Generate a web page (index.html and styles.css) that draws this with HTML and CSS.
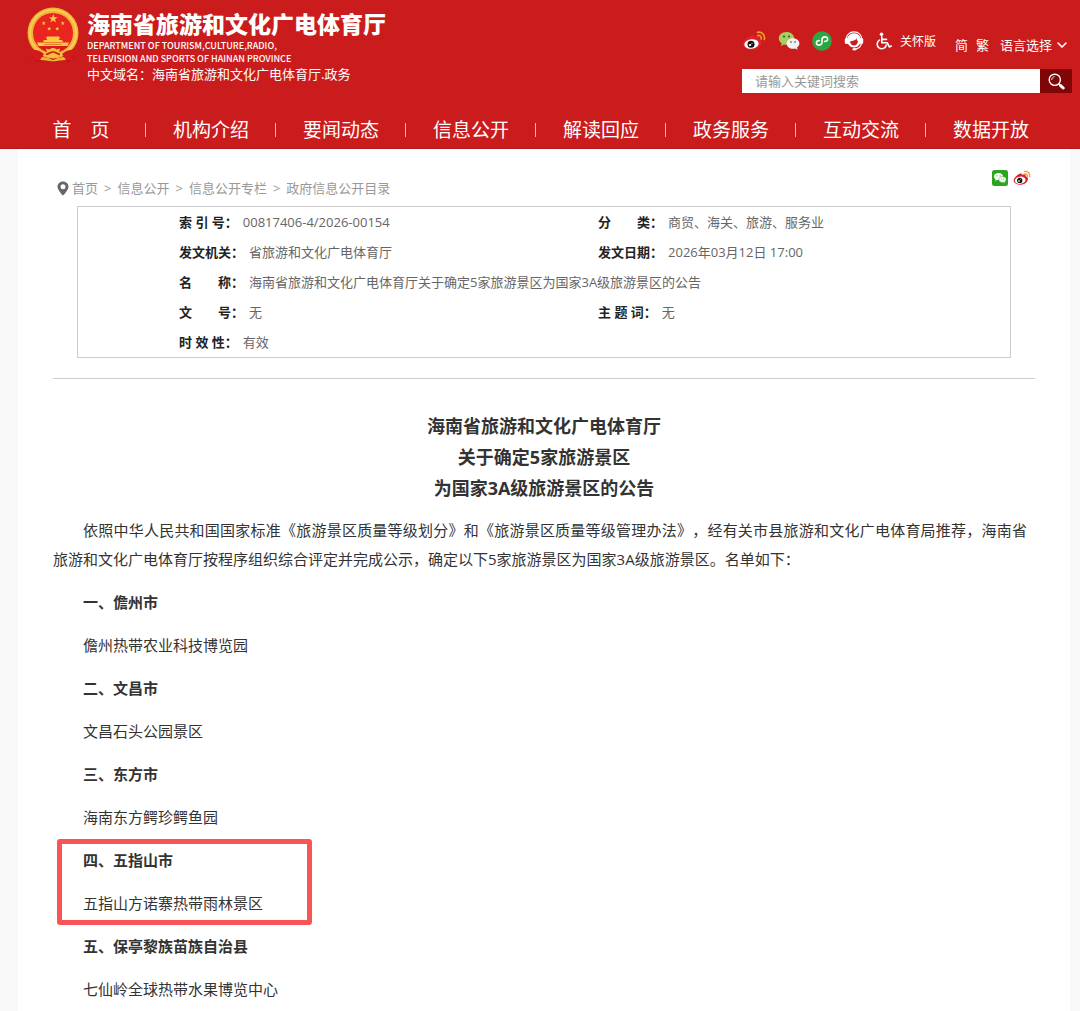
FILE: index.html
```
<!DOCTYPE html>
<html lang="zh-CN">
<head>
  <meta charset="UTF-8">
  <meta name="viewport" content="width=device-width, initial-scale=1">
  <title>海南省旅游和文化广电体育厅</title>
  <link rel="stylesheet" href="styles.css">
</head>
<body>

  <svg class="sprite" aria-hidden="true">
    <symbol id="star" viewBox="-10 -10 20 20">
      <path d="M0-10 2.3-3.1H9.5L3.7 1.2 5.9 8.1 0 3.9-5.9 8.1-3.7 1.2-9.5-3.1H-2.3Z"/>
    </symbol>
    <symbol id="weibo" viewBox="0 0 24 20">
      <path d="M9 4.3c1.700-.8 3.400-.4 3.100 1.500 2.500-1.100 5.400-1 4.800 1.700 2.300.8 3.300 2.300 3 4.400-.6 4-5.200 7-10.400 7C4.700 18.900.8 16.700.8 13.100.8 10 5.200 6 9 4.300Z" fill="#e0202a"/>
      <ellipse cx="9.500" cy="13" rx="7.200" ry="4.800" fill="#fff" transform="rotate(-7 9.500 13)"/>
      <circle cx="9" cy="13.200" r="3.500" fill="#111"/>
      <ellipse cx="8" cy="14" rx="1.300" ry="1" fill="#fff"/>
      <circle cx="10" cy="12.300" r=".6" fill="#fff"/>
      <path d="M15.500 1.300c4.500-.7 7.800 2.700 6.800 7.200M15.800 4.500c2.300-.4 3.900 1.200 3.400 3.500" fill="none" stroke="#f39a25" stroke-width="1.700" stroke-linecap="round"/>
    </symbol>
  </svg>

  <header class="header">
    <div class="header-top">
      <a class="brand" href="#">
        <svg class="emblem" viewBox="0 0 52 56" aria-hidden="true">
          <path d="M5 42 2 50l6 1 1 4 9-2 8 2 8-2 9 2 1-4 6-1-3-8Z" fill="#b70f12"/>
          <circle cx="26" cy="26" r="25.500" fill="#f0b437"/>
          <circle cx="26" cy="26" r="23" fill="none" stroke="#f8cd55" stroke-width="2"/>
          <circle cx="26" cy="26" r="20" fill="#ea2420"/>
          <g fill="#f9c93f">
            <use href="#star" x="21.500" y="7" width="9.500" height="9.500"/>
            <use href="#star" x="14.500" y="14" width="4.500" height="4.500"/>
            <use href="#star" x="33.500" y="14" width="4.500" height="4.500"/>
            <use href="#star" x="20" y="19.500" width="4.500" height="4.500"/>
            <use href="#star" x="28" y="19.500" width="4.500" height="4.500"/>
            <path d="M20 29.500h12l1.500 2h-1.500v1.500h3l1 2H16l1-2h3v-1.500h-1.500Z"/>
            <path d="M10 35.500h32l-1.500 3.500h-29Z"/>
          </g>
          <path d="M17 37.500h18" stroke="#d98b22"/>
          <path d="M11 39h30c-2 3-7 5-15 5s-13-2-15-5Z" fill="#d91b1a"/>
          <path d="M1.500 43c6-1 12 0 15.500 4l-4 7-5-1-1-3H2Zm49 0c-6-1-12 0-15.500 4l4 7 5-1 1-3H50Z" fill="#d2191b"/>
          <path d="m19 41.500 3.500 1c1-1 2-1.500 3.500-1.500s2.500.5 3.500 1.500l3.500-1-1 4 4.500 3-6 .5-4.500 2.500-4.500-2.500-6-.5 4.500-3Z" fill="#f5be3b"/>
          <path d="M19 47.500c4-1 4-2.500 7-2.500s3 1.500 7 2.500" fill="none" stroke="#d2191b" stroke-width="1.500"/>
          <path d="M15 50c4 0 7 1 11 3 4-2 7-3 11-3l2 3-6 .5-7 1-7-1-6-.5Z" fill="#eeb035"/>
        </svg>
        <span class="brand-text">
          <span class="brand-name">海南省旅游和文化广电体育厅</span>
          <span class="brand-en">DEPARTMENT OF TOURISM,CULTURE,RADIO,<br>TELEVISION AND SPORTS OF HAINAN PROVINCE</span>
          <span class="brand-domain">中文域名：海南省旅游和文化广电体育厅.政务</span>
        </span>
      </a>

      <div class="tools">
        <div class="tool-row">
          <div class="social">
            <a href="#" aria-label="微博"><svg width="24" height="20"><use href="#weibo"/></svg></a>
            <a href="#" aria-label="微信">
              <svg width="22" height="20" viewBox="0 0 22 20">
                <path d="M8.500 1C4 1 .8 3.800.8 7.300c0 2 1 3.800 2.900 5l-.8 2.700 3-1.500c.8.200 1.600.3 2.600.3 4.300 0 7.600-2.800 7.600-6.500S12.800 1 8.500 1Z" fill="#a6cf62"/>
                <circle cx="6" cy="5.500" r="1" fill="#334b1c"/><circle cx="11" cy="5.500" r="1" fill="#334b1c"/>
                <path d="M15 7.200c-3.600 0-6.400 2.300-6.400 5.200s2.800 5.300 6.400 5.300c.8 0 1.500-.1 2.200-.3l2.400 1.400-.6-2.300c1.500-1 2.400-2.400 2.400-4.100 0-2.900-2.800-5.200-6.400-5.200Z" fill="#f1f1f1"/>
                <circle cx="13" cy="11" r=".9" fill="#777"/><circle cx="17" cy="11" r=".9" fill="#777"/>
              </svg>
            </a>
            <a href="#" aria-label="小程序">
              <svg width="20" height="20" viewBox="0 0 20 20">
                <circle cx="10" cy="10" r="9.800" fill="#2ea443"/>
                <path d="M7.300 9.600c-1.900-.1-3 .9-2.900 2.300.1 1.400 1.300 2.300 2.700 2.200 1.700-.1 2.900-1.100 2.900-2.800V8.700c0-1.700 1.200-2.700 2.900-2.800 1.400-.1 2.600.8 2.700 2.200.1 1.400-1 2.400-2.900 2.300" fill="none" stroke="#fff" stroke-width="1.600" stroke-linecap="round"/>
              </svg>
            </a>
            <a href="#" aria-label="智能客服">
              <svg width="20" height="20" viewBox="0 0 20 20">
                <path d="M2.200 8C2.500 3.800 5.500.8 10 .8s7.500 3 7.800 7.200" fill="none" stroke="#fff" stroke-width="1.200"/>
                <path d="M10 2.200c-4.300 0-6.800 3-6.800 6.800 0 4 2.800 7.500 6.800 7.500s6.800-3.500 6.800-7.500c0-3.800-2.500-6.800-6.800-6.800Z" fill="#fff"/>
                <path d="M6 10.300c3 0 5.200-1 6.700-2.800 0 1.400.5 2.300 1.300 2.800-.3 2.600-1.600 4.200-4 4.200s-3.700-1.600-4-4.200Z" fill="#cb1c1d"/>
                <rect x=".8" y="7" width="3.500" height="6" rx="1.500" fill="#fff"/><rect x="15.700" y="7" width="3.500" height="6" rx="1.500" fill="#fff"/>
                <path d="M17.500 12c-.4 3.500-3 5.500-6 6" fill="none" stroke="#fff" stroke-width="1.200"/>
                <ellipse cx="10.500" cy="18.200" rx="2" ry="1.200" fill="#fff"/>
              </svg>
            </a>
            <a class="care" href="#">
              <svg width="16" height="18" viewBox="0 0 16 18" fill="none" stroke="#fff" stroke-width="1.600" stroke-linecap="round" stroke-linejoin="round">
                <circle cx="5.500" cy="2.300" r="1.800" fill="#fff" stroke="none"/>
                <path d="M5.800 4.500v6.200h5.400l2.100 4.200 2-.8M6 7.400h4.500M3.500 8.100A4.600 4.600 0 1 0 10.300 13"/>
              </svg>
              关怀版
            </a>
          </div>
          <div class="lang">
            <a href="#">简</a>
            <a href="#">繁</a>
            <button type="button" class="lang-btn">语言选择
              <svg width="10" height="6" viewBox="0 0 10 6"><path d="m1 1 4 4 4-4" fill="none" stroke="#fff" stroke-width="1.500" stroke-linecap="round"/></svg>
            </button>
          </div>
        </div>
        <form class="search">
          <input type="text" placeholder="请输入关键词搜索" aria-label="请输入关键词搜索">
          <button type="button" aria-label="搜索">
            <svg width="17" height="17" viewBox="0 0 17 17" fill="none" stroke="#fff" stroke-linecap="round">
              <circle cx="6.800" cy="6.800" r="5.600" stroke-width="1.400"/>
              <path d="M3.800 6.500c.2-1.500 1-2.400 2.400-2.700" stroke-width="1"/>
              <path d="m11.200 11.200 1 1" stroke-width="1.500"/>
              <path d="m12.600 12.600 2.600 2.400" stroke-width="3"/>
            </svg>
          </button>
        </form>
      </div>
    </div>

    <nav class="nav">
      <a href="#">首&emsp;页</a>
      <a href="#">机构介绍</a>
      <a href="#">要闻动态</a>
      <a href="#">信息公开</a>
      <a href="#">解读回应</a>
      <a href="#">政务服务</a>
      <a href="#">互动交流</a>
      <a href="#">数据开放</a>
    </nav>
  </header>

  <main class="page">
    <div class="location">
      <div class="crumbs">
        <svg width="12" height="15" viewBox="0 0 12 15"><path d="M6 .5C2.800.5.5 2.800.5 5.700.5 9 6 14.500 6 14.500S11.500 9 11.500 5.700C11.500 2.800 9.200.5 6 .5Zm0 2.800a2.500 2.500 0 1 1 0 5 2.500 2.500 0 0 1 0-5Z" fill="#666" fill-rule="evenodd"/></svg>
        <a href="#">首页</a><i>&gt;</i><a href="#">信息公开</a><i>&gt;</i><a href="#">信息公开专栏</a><i>&gt;</i><a href="#">政府信息公开目录</a>
      </div>
      <div class="share">
        <a href="#" aria-label="分享到微信">
          <svg width="16" height="16" viewBox="0 0 16 16">
            <rect width="16" height="16" rx="2.500" fill="#2ba51f"/>
            <path d="M6.500 3C4 3 2 4.500 2 6.500c0 1.100.6 2 1.600 2.700L3.200 10.800 5 9.900c2.900.5 5.800-1 5.900-3.400C11 4.500 9 3 6.500 3Z" fill="#fff"/>
            <path d="M10.500 6.500C8.400 6.500 6.800 7.800 6.800 9.500s1.600 3 3.700 3l1.200-.1 1.500.8-.3-1.400c.8-.6 1.300-1.400 1.300-2.300 0-1.700-1.600-3-3.700-3Z" fill="#fff" stroke="#2ba51f" stroke-width=".5"/>
            <g fill="#2ba51f"><circle cx="5" cy="5.800" r=".6"/><circle cx="8" cy="5.800" r=".6"/><circle cx="9.400" cy="9" r=".5"/><circle cx="11.700" cy="9" r=".5"/></g>
          </svg>
        </a>
        <a href="#" aria-label="分享到微博"><svg width="18" height="16"><use href="#weibo"/></svg></a>
      </div>
    </div>

    <dl class="meta">
      <div><dt>索 引 号：</dt><dd>00817406-4/2026-00154</dd></div>
      <div><dt>分　　类：</dt><dd>商贸、海关、旅游、服务业</dd></div>
      <div><dt>发文机关：</dt><dd>省旅游和文化广电体育厅</dd></div>
      <div><dt>发文日期：</dt><dd>2026年03月12日 17:00</dd></div>
      <div class="wide"><dt>名　　称：</dt><dd>海南省旅游和文化广电体育厅关于确定5家旅游景区为国家3A级旅游景区的公告</dd></div>
      <div><dt>文　　号：</dt><dd>无</dd></div>
      <div><dt>主 题 词：</dt><dd>无</dd></div>
      <div class="wide"><dt>时 效 性：</dt><dd>有效</dd></div>
    </dl>

    <article class="article">
      <h1>海南省旅游和文化广电体育厅<br>关于确定5家旅游景区<br>为国家3A级旅游景区的公告</h1>
      <p class="intro">依照中华人民共和国国家标准《旅游景区质量等级划分》和《旅游景区质量等级管理办法》，经有关市县旅游和文化广电体育局推荐，海南省旅游和文化广电体育厅按程序组织综合评定并完成公示，确定以下5家旅游景区为国家3A级旅游景区。名单如下：</p>
      <section>
        <h2>一、儋州市</h2>
        <p>儋州热带农业科技博览园</p>
      </section>
      <section>
        <h2>二、文昌市</h2>
        <p>文昌石头公园景区</p>
      </section>
      <section>
        <h2>三、东方市</h2>
        <p>海南东方鳄珍鳄鱼园</p>
      </section>
      <section class="marked">
        <h2>四、五指山市</h2>
        <p>五指山方诺寨热带雨林景区</p>
      </section>
      <section>
        <h2>五、保亭黎族苗族自治县</h2>
        <p>七仙岭全球热带水果博览中心</p>
      </section>
    </article>
  </main>

</body>
</html>
```

FILE: styles.css
```
*,
*::before,
*::after {
  box-sizing: border-box;
}

body {
  margin: 0;
  background: #f9f9f9;
  color: #333;
  font-family: "Open Sans", "Noto Sans CJK SC", sans-serif;
  font-size: 13px;
  text-spacing-trim: space-all;
}

a {
  color: inherit;
  text-decoration: none;
}

svg {
  display: block;
  flex: none;
}

button {
  padding: 0;
  border: 0;
  background: none;
  color: inherit;
  font: inherit;
  cursor: pointer;
}

.sprite {
  position: absolute;
  width: 0;
  height: 0;
}

/* header */
.header {
  background: #cb1c1d;
  border-bottom: 1px solid #b51516;
  color: #fff;
}

.header-top {
  display: flex;
  justify-content: space-between;
  height: 112px;
  padding: 7px 8px 0 27px;
}

.brand {
  display: flex;
  gap: 8px;
  white-space: nowrap;
}

.emblem {
  width: 52px;
  height: 56px;
}

.brand-text {
  display: flex;
  flex-direction: column;
  padding-top: 1px;
  font-family: "Noto Sans CJK SC", sans-serif;
}

.brand-name {
  font-size: 23px;
  font-weight: 900;
  line-height: 31px;
}

.brand-en {
  font-size: 9px;
  font-weight: 500;
  line-height: 13px;
}

.brand-domain {
  line-height: 18px;
}

.tools {
  width: 330px;
  padding-top: 22px;
}

.tool-row {
  display: flex;
  justify-content: space-between;
  height: 40px;
  white-space: nowrap;
}

.social {
  display: flex;
  align-items: center;
  gap: 12px;
  height: 24px;
}

.care {
  display: flex;
  align-items: center;
  gap: 8px;
  font-size: 12px;
}

.lang {
  display: flex;
  align-items: center;
  gap: 8px;
  height: 31px;
  padding-right: 5px;
}

.lang-btn {
  display: flex;
  align-items: center;
  gap: 5px;
  margin-left: 3px;
}

.search {
  display: flex;
  height: 24px;
}

.search input {
  flex: 1;
  min-width: 0;
  padding: 0 13px;
  border: 0;
  border-radius: 0;
  background: #fff;
  font: inherit;
}

.search input::placeholder {
  color: #999;
}

.search button {
  display: flex;
  align-items: center;
  justify-content: center;
  width: 32px;
  background: #800506;
}

.nav {
  display: flex;
  padding: 0 24px 0 16px;
  font-size: 19px;
  line-height: 36px;
}

.nav a {
  display: flex;
  flex: 1;
  align-items: center;
  justify-content: center;
  position: relative;
}

.nav a + a::before {
  content: "";
  position: absolute;
  left: -1px;
  width: 1px;
  height: 14px;
  background: #f0b5b5;
}

/* page */
.page {
  margin: 0 10px 0 18px;
  padding: 18px 35px 8px;
  background: #fff;
}

.location {
  display: flex;
  justify-content: space-between;
  padding: 0 4px;
}

.crumbs {
  display: flex;
  align-items: center;
  gap: 3px;
  padding-top: 10px;
  color: #999;
  line-height: 22px;
}

.crumbs i {
  padding: 0 3px;
  font-style: normal;
}

.share {
  display: flex;
  gap: 5px;
  padding-top: 3px;
}

.meta {
  display: grid;
  grid-template-columns: 419px 1fr;
  margin: 7px 24px 20px;
  padding-left: 101px;
  border: 1px solid #ccc;
  color: #666;
  line-height: 30px;
}

.meta div {
  display: flex;
  gap: 5px;
}

.meta .wide {
  grid-column: span 2;
}

.meta dt {
  color: #222;
  font-weight: bold;
}

.meta dd {
  margin: 0;
}

.article {
  padding-top: 32px;
  border-top: 1px solid #ccc;
  font-size: 15px;
  line-height: 29px;
}

.article h1 {
  margin: 0 0 12px;
  font-size: 18px;
  line-height: 31px;
  text-align: center;
}

.article h2,
.article p {
  margin: 0 0 14px;
  font-size: 15px;
  text-indent: 2em;
}

.article .intro {
  padding-right: 8px;
  text-align: justify;
}

/* red frame round one entry */
.marked {
  position: relative;
}

.marked::after {
  content: "";
  position: absolute;
  top: -7px;
  bottom: -7px;
  left: 4px;
  width: 255px;
  border: 5px solid #f95557;
  border-radius: 3px;
}
```
